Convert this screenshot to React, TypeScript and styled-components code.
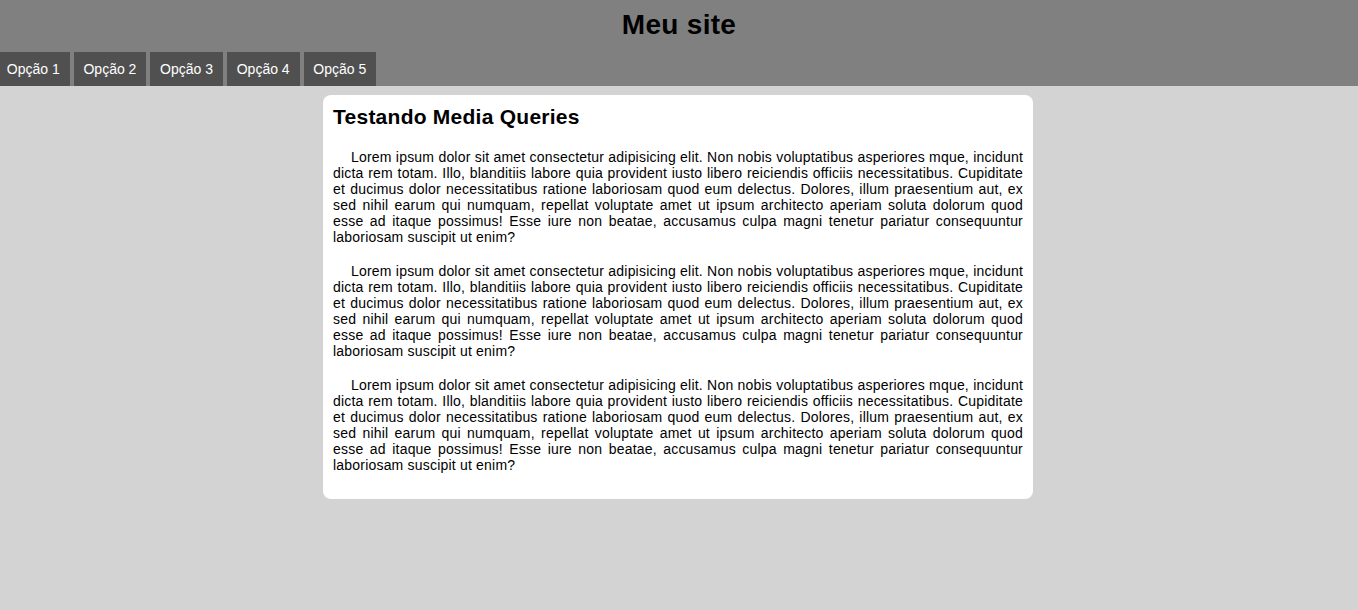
import React from "react";
import styled, { createGlobalStyle } from "styled-components";

const GlobalStyle = createGlobalStyle`
  html, body {
    margin: 0;
    padding: 0;
    background: #d3d3d3;
    font-family: "Liberation Sans", Arial, sans-serif;
    font-size: 14px;
    color: #000;
  }
`;

const Header = styled.header`
  background: #808080;
  padding-top: 9px;
  overflow: hidden;
`;

const SiteTitle = styled.h1`
  margin: 0 0 11px;
  font-size: 28px;
  font-weight: bold;
  letter-spacing: 0.3px;
  text-align: center;
`;

const Nav = styled.nav`
  display: flex;
  gap: 4px;
  margin-left: -3px;
`;

const NavItem = styled.a`
  display: flex;
  align-items: center;
  height: 34px;
  padding: 0 9.85px;
  background: #505050;
  color: #fff;
  font-size: 14px;
  text-decoration: none;
  white-space: nowrap;
`;

const Main = styled.main`
  display: flex;
  justify-content: center;
  padding: 9px 2px 0 0;
`;

const Card = styled.article`
  width: 690px;
  background: #fff;
  border-radius: 8px;
  padding: 10px 10px 8px;
`;

const CardTitle = styled.h2`
  margin: 0 0 20px;
  font-size: 21px;
  line-height: 24px;
  font-weight: bold;
  letter-spacing: 0.25px;
`;

const Paragraph = styled.p`
  margin: 0 0 18px;
  font-size: 14px;
  letter-spacing: 0.2px;
  text-align: justify;
  text-indent: 18px;
`;

const lorem =
  "Lorem ipsum dolor sit amet consectetur adipisicing elit. Non nobis voluptatibus asperiores mque, incidunt dicta rem totam. Illo, blanditiis labore quia provident iusto libero reiciendis officiis necessitatibus. Cupiditate et ducimus dolor necessitatibus ratione laboriosam quod eum delectus. Dolores, illum praesentium aut, ex sed nihil earum qui numquam, repellat voluptate amet ut ipsum architecto aperiam soluta dolorum quod esse ad itaque possimus! Esse iure non beatae, accusamus culpa magni tenetur pariatur consequuntur laboriosam suscipit ut enim?";

const options = ["Opção 1", "Opção 2", "Opção 3", "Opção 4", "Opção 5"];

export default function App() {
  return (
    <>
      <GlobalStyle />
      <Header>
        <SiteTitle>Meu site</SiteTitle>
        <Nav>
          {options.map((o) => (
            <NavItem key={o} href="#">
              {o}
            </NavItem>
          ))}
        </Nav>
      </Header>
      <Main>
        <Card>
          <CardTitle>Testando Media Queries</CardTitle>
          <Paragraph>{lorem}</Paragraph>
          <Paragraph>{lorem}</Paragraph>
          <Paragraph>{lorem}</Paragraph>
        </Card>
      </Main>
    </>
  );
}
